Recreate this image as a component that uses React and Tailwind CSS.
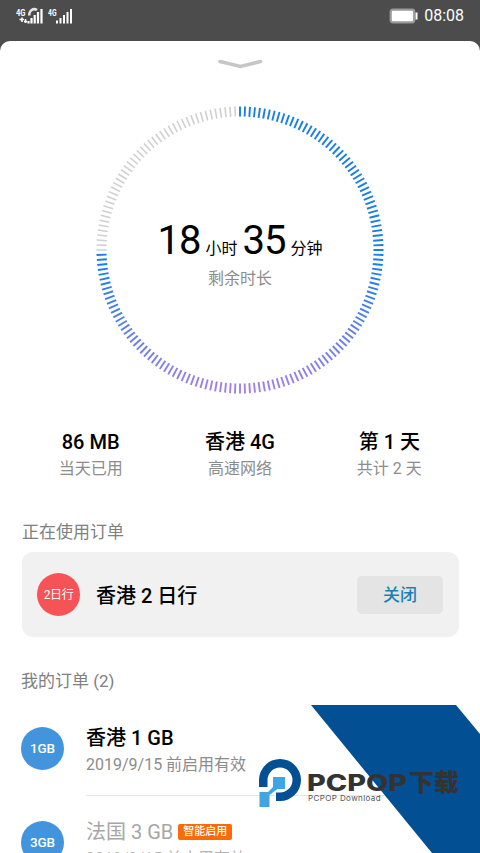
import React from "react";

const TICK_COUNT = 180;
const ACTIVE_TICKS = 135;

const stats = [
  { value: "86 MB", label: "当天已用" },
  { value: "香港 4G", label: "高速网络" },
  { value: "第 1 天", label: "共计 2 天" },
];

const orders = [
  { badge: "1GB", title: "香港 1 GB", note: "2019/9/15 前启用有效" },
  { badge: "3GB", title: "法国 3 GB", note: "2019/9/15 前启用有效", tag: "智能启用", muted: true },
];

// blue at the top, violet at the bottom
const tickColor = (index) => {
  if (index >= ACTIVE_TICKS) return "#d0d0d0";
  const depth = (1 - Math.cos((index * 2 * Math.PI) / TICK_COUNT)) / 2;
  const t = Math.max(0, (depth - 0.56) / 0.44);
  const mix = (a, b) => Math.round(a + (b - a) * t);
  return `rgb(${mix(24, 160)}, ${mix(126, 128)}, ${mix(232, 236)})`;
};

const StatusBar = () => (
  <header className="flex h-[41px] items-start justify-between bg-[#4c4c4c] pl-4 pr-4 pt-[7px] text-white">
    <div className="flex gap-[5px]">
      <svg width="27" height="18" viewBox="0 0 27 18">
        <text x="0" y="8.500" fontSize="9.5" fontWeight="700" fill="#fff" textLength="9.5" lengthAdjust="spacingAndGlyphs">4G</text>
        <path d="M3.500 12.500h4.500M6 10.500v4.500M8 14.500h3M9.500 12v4" stroke="#fff" strokeWidth="1.6" />
        <path d="M13.500 8.500a5 5 0 0 1 7.500-5.500" fill="none" stroke="#e4e4e4" strokeWidth="2.600" />
        <path d="M12.500 16.500v-2.500M15.500 16.500V11M18.700 16.500V8M22 16.500V5M25.500 16.500V2" stroke="#fff" strokeWidth="2.200" />
      </svg>
      <svg width="25" height="18" viewBox="0 0 25 18">
        <text x="0" y="8.500" fontSize="9.5" fontWeight="700" fill="#fff" textLength="8.5" lengthAdjust="spacingAndGlyphs">4G</text>
        <path d="M9 16.500v-3M12.500 16.500V11M16 16.500V8M19.500 16.500V5M23 16.500V2" stroke="#fff" strokeWidth="2" />
      </svg>
    </div>
    <div className="flex items-center gap-[6px]">
      <svg width="29" height="16" viewBox="0 0 29 16">
        <rect x="1.700" y="1.700" width="23.500" height="12.600" rx="2" fill="#fff" stroke="#9a9a9a" strokeWidth="2.200" />
        <rect x="26.500" y="4.500" width="2" height="7" fill="#fff" />
      </svg>
      <span className="text-[16px] leading-[18px]">08:08</span>
    </div>
  </header>
);

const RemainingRing = () => (
  <div className="relative mx-auto mt-[35px] h-[290px] w-[290px]">
    <svg width="290" height="290" viewBox="0 0 290 290">
      {Array.from({ length: TICK_COUNT }, (_, i) => (
        <line
          key={i}
          x1="145"
          y1="1.5"
          x2="145"
          y2="11.5"
          stroke={tickColor(i)}
          strokeWidth={i < ACTIVE_TICKS ? 1.9 : 1.6}
          transform={`rotate(${i * 2} 145 145)`}
        />
      ))}
    </svg>
    <div className="absolute inset-x-0 top-[112px] text-center">
      <div className="flex h-[48px] items-baseline justify-center whitespace-nowrap leading-[48px]">
        <span className="text-[40px] tracking-[-1px]">18</span>
        <span className="ml-[5px] text-[16px]">小时</span>
        <span className="ml-[5px] text-[40px] tracking-[-1px]">35</span>
        <span className="ml-[5px] text-[16px]">分钟</span>
      </div>
      <p className="mt-[2px] text-[16px] leading-6 text-[#8c8c8c]">剩余时长</p>
    </div>
  </div>
);

const Stats = () => (
  <div className="mt-[33px] grid grid-cols-3 px-4 text-center">
    {stats.map((item) => (
      <div key={item.label}>
        <p className="text-[20px] font-medium leading-7">{item.value}</p>
        <p className="text-[16px] leading-[26px] text-[#8c8c8c]">{item.label}</p>
      </div>
    ))}
  </div>
);

const OrderRow = ({ order }) => (
  <div className="flex h-[94px] gap-[22px]">
    <div className="mt-[25px] flex h-[43px] w-[43px] shrink-0 items-center justify-center rounded-full bg-[#4294dd] text-[13.5px] font-medium tracking-[-0.2px] text-white">
      {order.badge}
    </div>
    <div className="flex-1 border-b border-[#e6e6e6] pt-[22px]">
      <div className={`flex items-center gap-[5px] leading-7 ${order.muted ? "text-[#a6a6a6]" : "text-black"}`}>
        <span className={`text-[20px] ${order.muted ? "" : "font-medium"}`}>{order.title}</span>
        {order.tag && (
          <span className="h-[16px] w-[54px] rounded-[2px] bg-[#f96a08] text-center text-[11px] font-medium leading-[16px] text-white">
            {order.tag}
          </span>
        )}
      </div>
      <p className={`whitespace-nowrap text-[16px] leading-[26px] ${order.muted ? "text-[#b4b4b4]" : "text-[#8c8c8c]"}`}>
        {order.note}
      </p>
    </div>
  </div>
);

const Watermark = () => (
  <div className="absolute bottom-0 right-0 h-[148px] w-[225px]">
    <svg className="absolute right-0 top-0" width="169" height="148" viewBox="0 0 169 148">
      <path d="M0 0H145L169 29V148H121Z" fill="#025093" />
    </svg>
    <div className="absolute left-[4px] top-[54px] flex gap-[6px]">
      <svg width="43" height="49" viewBox="0 0 43 49">
        <path d="M0 28V21A21 21 0 1 1 21 42H17V33.500H21A12.500 12.500 0 1 0 8.500 21V28Z" fill="#025093" />
        <path d="M14 18H26V30H18.500L10.500 36V48H0.500V33H9L14 28Z" fill="#42a5e1" />
      </svg>
      <div className="pt-[11px] text-[#333]">
        <svg className="block overflow-visible" width="152" height="24" viewBox="0 0 152 24">
          <text x="-1" y="21" fontFamily="Inter" fontSize="22.500" fontWeight="800" fill="#333" textLength="100" lengthAdjust="spacingAndGlyphs">PCPOP</text>
          <text x="101" y="21" fontSize="24" fontWeight="900" fill="#333" textLength="50" lengthAdjust="spacingAndGlyphs">下载</text>
        </svg>
        <p className="-mt-[2px] font-[Inter] text-[8px] leading-[12px] tracking-[0.4px] text-[#555]">PCPOP Download</p>
      </div>
    </div>
  </div>
);

const App = () => {
  return (
    <div className="relative h-[853px] w-[480px] overflow-hidden bg-[#4c4c4c] font-[Roboto,'Noto_Sans_CJK_SC',sans-serif] text-black">
      <StatusBar />
      <main className="h-[812px] overflow-hidden rounded-t-[10px] bg-white pt-[17px]">
        <svg className="mx-auto block" width="46" height="12" viewBox="0 0 46 12">
          <path d="M3 3.500L23.500 8.500L43.500 3.500" fill="none" stroke="#c6c6c6" strokeWidth="3.500" strokeLinecap="round" />
        </svg>
        <RemainingRing />
        <Stats />

        <section className="mt-[38px] px-[22px]">
          <h2 className="text-[17px] leading-6 text-[#808080]">正在使用订单</h2>
          <div className="mt-[8px] flex h-[85px] w-[437px] items-center rounded-[11px] bg-[#f1f1f1] pl-[15px] pr-4">
            <div className="flex h-[43px] w-[43px] items-center justify-center rounded-full bg-[#f65357] pt-px text-[12px] tracking-[-0.4px] text-white">
              2日行
            </div>
            <span className="ml-4 pt-[3px] text-[20px] font-medium">香港 2 日行</span>
            <button className="ml-auto h-[38px] w-[86px] rounded-[5px] bg-[#e4e4e4] pt-[3px] text-[17px] font-medium text-[#1780b4]">
              关闭
            </button>
          </div>
        </section>

        <section className="mt-[32px] pl-[21px]">
          <h2 className="text-[17px] leading-6 text-[#808080]">我的订单 (2)</h2>
          <div className="mt-[9px]">
            {orders.map((order) => (
              <OrderRow key={order.badge} order={order} />
            ))}
          </div>
        </section>
      </main>
      <Watermark />
    </div>
  );
};

export default App;
